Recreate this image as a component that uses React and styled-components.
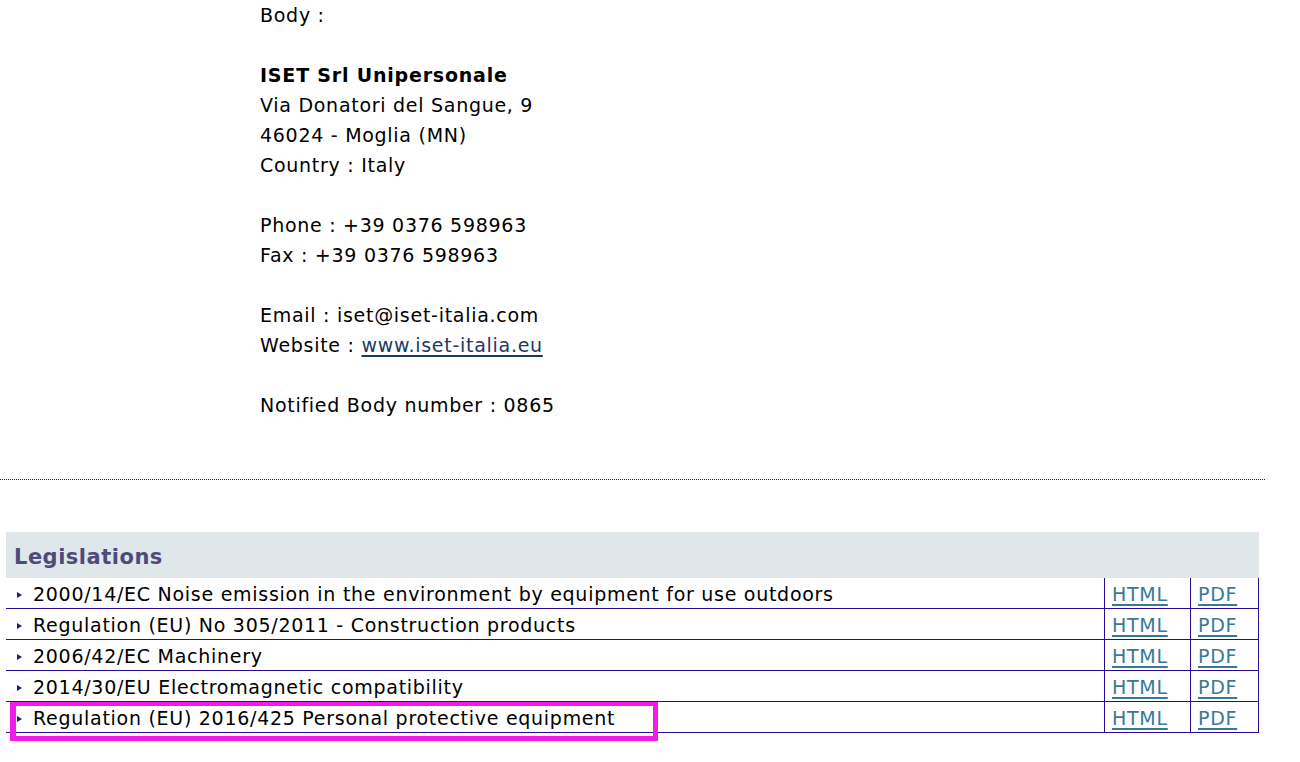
import React from "react";
import styled, { createGlobalStyle } from "styled-components";

const Global = createGlobalStyle`
  html, body { margin: 0; padding: 0; background: #fff; }
  body { font-family: "DejaVu Sans", Verdana, sans-serif; color: #000; }
`;

const Page = styled.div`
  width: 1300px;
  height: 762px;
  overflow: hidden;
  position: relative;
`;

const Address = styled.div`
  padding-left: 260px;
  font-size: 19px;
  letter-spacing: 0.72px;
  line-height: 30px;
`;

const Line = styled.div`
  height: 30px;
  white-space: nowrap;
  font-weight: ${(p) => (p.$bold ? "bold" : "normal")};
  letter-spacing: ${(p) => (p.$bold ? "0.8px" : "inherit")};
`;

const SiteLink = styled.a`
  color: #1b3a66;
  text-decoration: underline;
  text-decoration-thickness: 2px;
  text-underline-offset: 3px;
`;

const Divider = styled.div`
  margin-top: 59px;
  width: 1265px;
  border-top: 1px dotted #22108a;
`;

const Section = styled.div`
  margin: 52px 0 0 6px;
  width: 1253px;
  position: relative;
`;

const Header = styled.div`
  height: 46px;
  box-sizing: border-box;
  padding: 3px 0 0 8px;
  background: #dfe7ea;
  display: flex;
  align-items: center;
  font-size: 21px;
  letter-spacing: 0.5px;
  font-weight: bold;
  color: #4f4b78;
`;

const Table = styled.div`
  display: grid;
  grid-template-columns: 1098px 86px 69px;
`;

const Cell = styled.div`
  height: 30px;
  padding-top: 2px;
  box-sizing: border-box;
  height: 31px;
  border-bottom: 1px solid #2a0a96;
  border-left: ${(p) => (p.$side ? "1px solid #2a0a96" : "none")};
  border-right: ${(p) => (p.$last ? "1px solid #2a0a96" : "none")};
  display: flex;
  align-items: center;
  padding-left: ${(p) => (p.$side ? "7px" : "11px")};
  font-size: 19px;
  letter-spacing: 0.72px;
  white-space: nowrap;
`;

const Bullet = styled.span`
  width: 0;
  height: 0;
  border-top: 3.5px solid transparent;
  border-bottom: 3.5px solid transparent;
  border-left: 5px solid #1e1a86;
  margin: 2px 11px 0 0;
`;

const DocLink = styled.a`
  color: #3a7898;
  text-decoration: underline;
  text-decoration-thickness: 2px;
  text-underline-offset: 3px;
`;

const Highlight = styled.div`
  position: absolute;
  left: 4px;
  top: 170px;
  width: 637px;
  height: 30px;
  border: 5px solid #f11de6;
  border-top-width: 4px;
  border-left-width: 6px;
  pointer-events: none;
`;

const rows = [
  "2000/14/EC Noise emission in the environment by equipment for use outdoors",
  "Regulation (EU) No 305/2011 - Construction products",
  "2006/42/EC Machinery",
  "2014/30/EU Electromagnetic compatibility",
  "Regulation (EU) 2016/425 Personal protective equipment",
];

export default function App() {
  return (
    <Page>
      <Global />
      <Address>
        <Line>Body :</Line>
        <Line />
        <Line $bold>ISET Srl Unipersonale</Line>
        <Line>Via Donatori del Sangue, 9</Line>
        <Line>46024 - Moglia (MN)</Line>
        <Line>Country : Italy</Line>
        <Line />
        <Line>Phone : +39 0376 598963</Line>
        <Line>Fax : +39 0376 598963</Line>
        <Line />
        <Line>Email : iset@iset-italia.com</Line>
        <Line>
          Website : <SiteLink href="#">www.iset-italia.eu</SiteLink>
        </Line>
        <Line />
        <Line>Notified Body number : 0865</Line>
      </Address>
      <Divider />
      <Section>
        <Header>Legislations</Header>
        <Table>
          {rows.map((r) => (
            <React.Fragment key={r}>
              <Cell>
                <Bullet />
                {r}
              </Cell>
              <Cell $side>
                <DocLink href="#">HTML</DocLink>
              </Cell>
              <Cell $side $last>
                <DocLink href="#">PDF</DocLink>
              </Cell>
            </React.Fragment>
          ))}
        </Table>
        <Highlight />
      </Section>
    </Page>
  );
}
